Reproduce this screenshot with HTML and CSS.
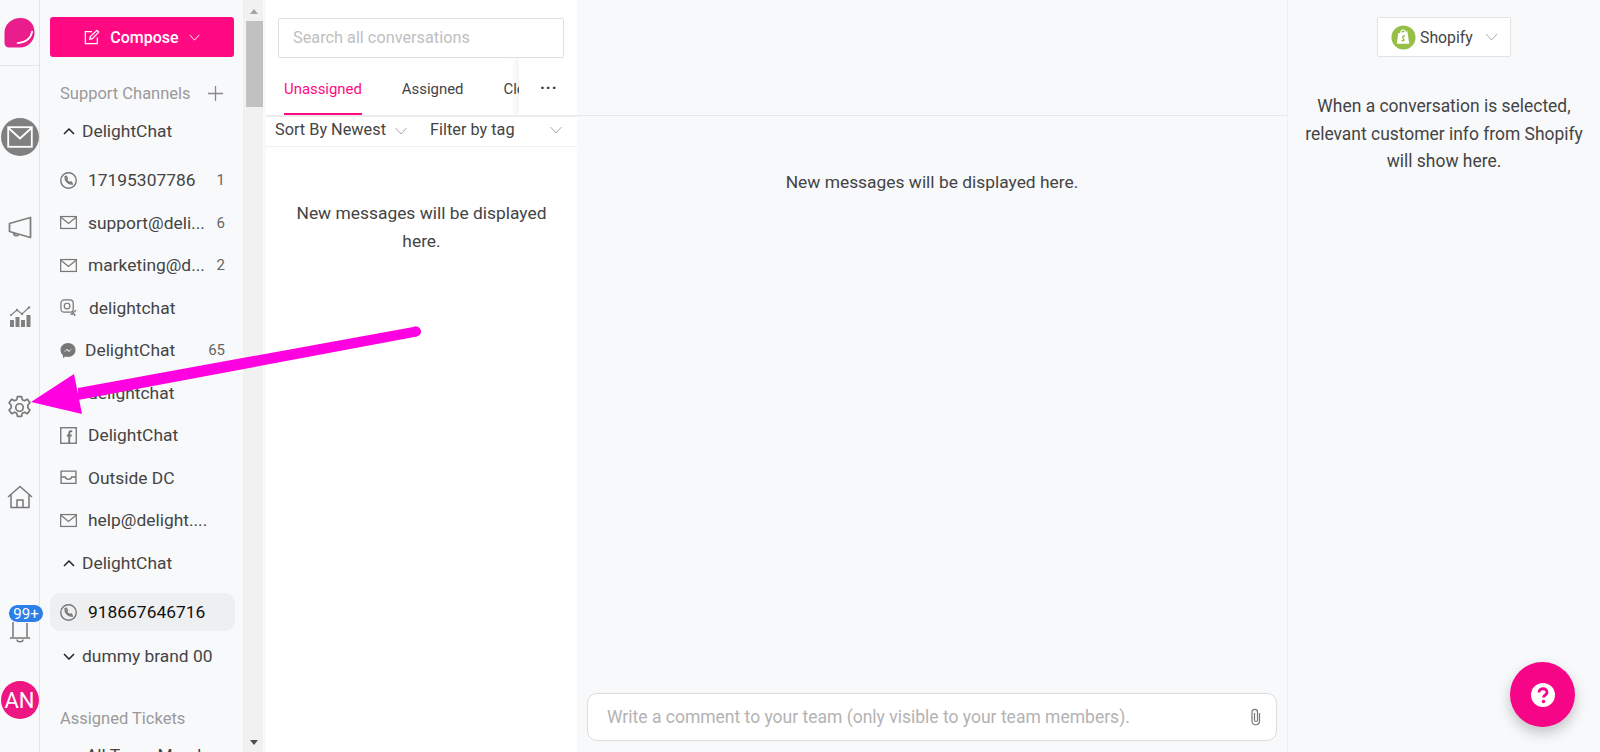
FILE: index.html
```html
<!DOCTYPE html>
<html lang="en">
<head>
<meta charset="utf-8">
<title>DelightChat</title>
<link rel="stylesheet" href="styles.css">
</head>
<body>
<div class="app">
  <nav class="rail">
    <div class="rail-logo">
      <svg class="logo" viewBox="0 0 32 32"><path d="M17 1C26 1 31.500 7.500 31.500 16C31.500 25 25 31.500 16 31.500H5.500C2.500 31.500.5 29.500.5 26.500V16C.5 7.500 8 1 17 1Z" fill="#e91e8c"/><path d="M29 15C28 21 23 26 14 27" fill="none" stroke="#fff" stroke-width="1.800" stroke-linecap="round"/></svg>
    </div>
    <div class="rail-item mail-item">
      <span class="mail-circle"><svg viewBox="0 0 26 22" width="26" height="22"><rect x="1.200" y="1.200" width="23.600" height="19.600" fill="none" stroke="#fff" stroke-width="1.800"/><path d="M1.500 2L13 12.500L24.500 2" fill="none" stroke="#fff" stroke-width="1.800"/></svg></span>
    </div>
    <div class="rail-item megaphone">
      <svg viewBox="0 0 24 24" width="24" height="24"><path d="M1.500 7.500L22.500 1.500V21.500L1.500 15.500ZM5.500 16.500C5.500 20.500 10.500 20.500 10.500 18" fill="none" stroke="#808080" stroke-width="1.800" stroke-linejoin="round"/></svg>
    </div>
    <div class="rail-item chart">
      <svg viewBox="0 0 22 22" width="22" height="22"><path d="M1 14h4v7H1zM6.500 11h4v10h-4zM12 14h4v7h-4zM17.500 9h4v12h-4z" fill="#808080"/><path d="M2 9L8 4L13 8L20 1.500" fill="none" stroke="#808080" stroke-width="1.100"/><circle cx="2" cy="9" r="1.100" fill="#808080"/><circle cx="8" cy="4" r="1.200" fill="#808080"/><circle cx="13" cy="8" r="1.200" fill="#808080"/><circle cx="20" cy="1.500" r="1.200" fill="#808080"/></svg>
    </div>
    <div class="rail-item gear">
      <svg viewBox="0 0 24 24" width="25" height="25" fill="none" stroke="#777" stroke-width="1.600" stroke-linejoin="round"><circle cx="12" cy="12" r="3.600"/><path d="M10 1.500h4l.6 3 2.200 1 2.700-1.500 2.500 3.500-2 2.300v2.400l2 2.300-2.500 3.500-2.700-1.500-2.200 1-.6 3h-4l-.6-3-2.200-1-2.700 1.500-2.500-3.500 2-2.300v-2.400l-2-2.300 2.500-3.500 2.700 1.500 2.200-1z"/></svg>
    </div>
    <div class="rail-item home">
      <svg viewBox="0 0 26 24" width="26" height="24" fill="none" stroke="#777" stroke-width="1.500" stroke-linejoin="round"><path d="M1 12L13 1.500L25 12M4 10V22.500H22V10M10 22.500V15H16V22.500"/></svg>
    </div>
    <div class="rail-item bell">
      <svg viewBox="0 0 22 22" width="22" height="22" fill="none" stroke="#777" stroke-width="1.500"><path d="M4 1V16M18 1V16M1 17H21"/><path d="M8 18.500C8 21.500 14 21.500 14 18.500" /></svg>
      <span class="badge">99+</span>
    </div>
    <div class="rail-item avatar-item"><span class="avatar">AN</span></div>
  </nav>

  <aside class="sidebar">
    <div class="side-inner">
      <button class="compose">
        <svg viewBox="0 0 18 18" width="16" height="16" fill="none" stroke="#fff" stroke-width="1.400"><path d="M15 9.500V16.500H1.500V3H9"/><path d="M6.500 11.500L7.200 8.500L14.500 1.500L16.500 3.500L9.500 10.800Z"/></svg>
        <span>Compose</span>
        <svg viewBox="0 0 12 8" width="11" height="7" fill="none" stroke="#fff" stroke-width="1.100"><path d="M.5 1L6 7L11.500 1"/></svg>
      </button>
      <div class="section-head"><span>Support Channels</span>
        <svg viewBox="0 0 15 15" width="15" height="15" stroke="#888" stroke-width="1.300"><path d="M7.500 0V15M0 7.500H15"/></svg>
      </div>
      <div class="brand brand-first"><svg class="chev" viewBox="0 0 12 8"><path d="M1 7L6 2L11 7"/></svg>DelightChat</div>
      <div class="channel first">
        <svg class="ci" viewBox="1 1 16 16"><circle cx="9" cy="9" r="7.300"/><path d="M5.800 5.500C5.300 9 9 12.900 12.600 12.300L11.700 10.500L10.200 10.900C8.700 10.400 7.700 9.400 7.200 8L8 6.800L6.800 5Z"/></svg>
        <span class="cn">17195307786</span><span class="count">1</span></div>
      <div class="channel">
        <svg class="ci" viewBox="0 0 18 14"><rect x=".7" y=".7" width="16.600" height="12.600"/><path d="M1 1.500L9 8L17 1.500"/></svg>
        <span class="cn">support@deli...</span><span class="count">6</span></div>
      <div class="channel">
        <svg class="ci" viewBox="0 0 18 14"><rect x=".7" y=".7" width="16.600" height="12.600"/><path d="M1 1.500L9 8L17 1.500"/></svg>
        <span class="cn">marketing@d...</span><span class="count">2</span></div>
      <div class="channel insta">
        <svg class="ci" viewBox="0 0 18 18"><rect x="1" y="1" width="13" height="13" rx="3.500"/><circle cx="7.500" cy="7.500" r="3"/><path d="M17 12L12 16H15.500V18"/></svg>
        <span class="cn">delightchat</span></div>
      <div class="channel messenger">
        <svg class="ci solid" viewBox="0 0 16 16"><path d="M8 .5C3.700.5.500 3.500.500 7.500C.500 9.700 1.500 11.500 3 12.800V15.500L5.500 14.100C6.300 14.300 7.100 14.500 8 14.500C12.300 14.500 15.500 11.400 15.500 7.500C15.500 3.500 12.300.5 8 .5Z"/><path class="light" d="M3.500 10L7 6.200L9 8.200L12.500 5.500L9 9.500L7 7.500Z"/></svg>
        <span class="cn">DelightChat</span><span class="count">65</span></div>
      <div class="channel">
        <svg class="ci" viewBox="0 0 18 18"><rect x="1" y="1" width="13" height="13" rx="3.500"/><circle cx="7.500" cy="7.500" r="3"/></svg>
        <span class="cn">delightchat</span></div>
      <div class="channel">
        <svg class="ci" viewBox="0 0 16 16"><rect x=".7" y=".7" width="14.600" height="14.600"/><path d="M11.500 4H10C9 4 8.700 4.600 8.700 5.500V15M6.500 8H11" stroke-width="1.800"/></svg>
        <span class="cn">DelightChat</span></div>
      <div class="channel">
        <svg class="ci" viewBox="0 0 16 14"><path d="M1 1H15V12.500H1ZM1 6.500H5C5.500 9.500 10.500 9.500 11 6.500H15"/></svg>
        <span class="cn">Outside DC</span></div>
      <div class="channel">
        <svg class="ci" viewBox="0 0 18 14"><rect x=".7" y=".7" width="16.600" height="12.600"/><path d="M1 1.500L9 8L17 1.500"/></svg>
        <span class="cn">help@delight....</span></div>
      <div class="brand brand-second"><svg class="chev" viewBox="0 0 12 8"><path d="M1 7L6 2L11 7"/></svg>DelightChat</div>
      <div class="channel active">
        <svg class="ci" viewBox="1 1 16 16"><circle cx="9" cy="9" r="7.300"/><path d="M5.800 5.500C5.300 9 9 12.900 12.600 12.300L11.700 10.500L10.200 10.900C8.700 10.400 7.700 9.400 7.200 8L8 6.800L6.800 5Z"/></svg>
        <span class="cn">918667646716</span></div>
      <div class="brand brand-third"><svg class="chev" viewBox="0 0 12 8"><path d="M1 2L6 7L11 2"/></svg>dummy brand 00</div>
      <div class="section-head assigned"><span>Assigned Tickets</span></div>
      <div class="brand last">All Team Members</div>
    </div>
    <div class="scrollbar">
      <span class="arrow-up"></span>
      <span class="thumb"></span>
      <span class="arrow-down"></span>
    </div>
  </aside>

  <section class="list">
    <div class="search"><span>Search all conversations</span></div>
    <div class="tabs">
      <span class="tab on">Unassigned</span>
      <span class="tab">Assigned</span>
      <span class="tab">Closed</span>
      <span class="more">···</span>
    </div>
    <div class="filters">
      <span class="sort">Sort By Newest<svg class="dd" viewBox="0 0 12 8"><path d="M.5 1L6 7L11.500 1"/></svg></span>
      <span class="tagf">Filter by tag<svg class="dd" viewBox="0 0 12 8"><path d="M.5 1L6 7L11.500 1"/></svg></span>
    </div>
    <p class="empty">New messages will be displayed here.</p>
  </section>

  <main class="main">
    <div class="main-head"></div>
    <p class="main-empty">New messages will be displayed here.</p>
    <div class="comment">
      <span>Write a comment to your team (only visible to your team members).</span>
      <svg viewBox="0 0 12 18" width="12" height="18" fill="none" stroke="#777" stroke-width="1.200"><path d="M9.500 5V13C9.500 18 2 18 2 13V4C2 .5 7.500.5 7.500 4V12C7.500 14 4.500 14 4.500 12V5"/></svg>
    </div>
  </main>

  <aside class="info">
    <div class="shopify">
      <svg viewBox="0 0 26 26" width="25" height="25"><circle cx="13" cy="13" r="12.500" fill="#95bf47"/><path d="M7.500 8.500L17 6.500L19 19.500L6 19.500Z" fill="#fff"/><path d="M10 9C10 4 15 4 15 8" fill="none" stroke="#fff" stroke-width="1.100"/><path d="M14.500 11.500C12.500 11 11 13 13 14.500C14.500 15.500 13 17 11 16" fill="none" stroke="#95bf47" stroke-width="1.400"/></svg>
      <span>Shopify</span>
      <svg class="dd big" viewBox="0 0 12 8"><path d="M.5 1L6 7L11.500 1"/></svg>
    </div>
    <p class="info-text">When a conversation is selected, relevant customer info from Shopify will show here.</p>
  </aside>
</div>

<button class="fab" aria-label="Help">
  <svg viewBox="0 0 24 24" width="24" height="24"><circle cx="12" cy="12" r="12" fill="#fff"/><path d="M8 9.500C8 4.500 16 4.500 16 9.500C16 12 12.500 12 12.500 14.500" fill="none" stroke="#f60587" stroke-width="2.800"/><circle cx="12.500" cy="18.500" r="1.800" fill="#f60587"/></svg>
</button>

<svg class="annotation" viewBox="0 0 1600 752" width="1600" height="752">
  <path d="M416 326.500L417 336.500L78 400L78 388Z" fill="#ff00e0"/>
  <circle cx="416" cy="331.500" r="5" fill="#ff00e0"/>
  <path d="M31 402L74 374L82 414Z" fill="#ff00e0"/>
</svg>
</body>
</html>
```

FILE: styles.css
```css
* { box-sizing: border-box; }
html, body { margin: 0; height: 100%; overflow: hidden; }
body { font-family: Roboto, "Liberation Sans", sans-serif; color: #444; background: #f8f9fb; }
.app { display: flex; height: 752px; }

/* left rail */
.rail { width: 40px; flex: none; background: #f8f9fb; border-right: 1px solid #e2e3e6; display: flex; flex-direction: column; align-items: center; }
.rail-logo { width: 100%; height: 66px; border-bottom: 1px solid #e6e7ea; padding-top: 17px; display: flex; justify-content: center; align-items: flex-start; }
.logo { width: 31px; height: 31px; }
.rail-item { position: relative; height: 40px; display: flex; align-items: center; justify-content: center; width: 100%; flex: none; }
.mail-item { margin-top: 51px; }
.mail-circle { width: 38px; height: 38px; border-radius: 50%; background: #808080; display: flex; align-items: center; justify-content: center; }
.megaphone { margin-top: 51px; }
.chart { margin-top: 49px; }
.gear { margin-top: 50px; }
.home { margin-top: 50px; }
.bell { margin-top: 95px; }
.avatar-item { margin-top: 28px; }
.avatar { width: 38px; height: 38px; border-radius: 50%; background: #ed1683; color: #fff; font-size: 22px; display: flex; align-items: center; justify-content: center; }
.badge { position: absolute; left: 8px; top: -8px; width: 36px; height: 19px; border-radius: 10px; background: #2d7fe8; border: 1px solid #fff; color: #fff; font-size: 15px; display: flex; align-items: center; justify-content: center; z-index: 2; }

/* channel sidebar */
.sidebar { width: 223px; flex: none; display: flex; background: #f8f9fb; overflow: hidden; }
.side-inner { width: 203px; flex: none; padding: 17px 0 0 10px; }
.compose { width: 184px; height: 40px; border: 0; border-radius: 3px; background: #ff0a83; color: #fff; font: 500 16px Roboto, sans-serif; display: flex; align-items: center; justify-content: center; gap: 10px; padding: 0; }
.section-head { display: flex; justify-content: space-between; align-items: center; width: 163px; margin: 25px 0 0 10px; height: 22px; color: #9a9a9a; font-size: 16.500px; }
.brand { display: flex; align-items: center; height: 22px; margin: 21px 0 0 13px; font-size: 17.400px; white-space: nowrap; }
.brand-first { margin-top: 16px; }
.brand-second { margin-top: 13px; }
.brand-third { margin-top: 14px; }
.chev { width: 12px; height: 8px; margin-right: 7px; fill: none; stroke: #222; stroke-width: 1.500; }
.channel { display: flex; align-items: center; height: 38px; margin-top: 4.500px; width: 185px; padding: 0 10px 0 10px; border-radius: 10px; font-size: 17.400px; white-space: nowrap; }
.channel.first { margin-top: 19px; }
.ci { width: 17px; height: 17px; margin-right: 11px; flex: none; fill: none; stroke: #777; stroke-width: 1.300; }
.ci.solid { fill: #777; stroke: none; width: 16px; }
.ci .light { fill: #f8f9fb; }
.cn { flex: 1; }
.count { color: #666; font-size: 15px; }
.insta .ci { margin-right: 12px; }
.messenger .ci { margin-right: 9px; }
.active { background: #eeeff1; color: #111; margin-top: 19px; }
.assigned { margin-top: 40px; }
.last { margin-left: 36px; margin-top: 15px; }
.scrollbar { width: 20px; flex: none; position: relative; background: #f1f1f1; }
.thumb { position: absolute; left: 3px; top: 21px; width: 17px; height: 86px; background: #c1c1c1; }
.arrow-up, .arrow-down { position: absolute; left: 7px; width: 0; height: 0; border-left: 4.500px solid transparent; border-right: 4.500px solid transparent; }
.arrow-up { top: 9px; border-bottom: 5px solid #a3a3a3; }
.arrow-down { bottom: 7px; border-top: 5px solid #505050; }

/* conversation list */
.list { width: 311px; flex: none; margin-left: 3px; background: #fff; padding-top: 1px; }
.search { margin: 17px 13px 0 12px; height: 40px; border: 1px solid #e0e0e0; border-radius: 2px; padding: 0 14px 2px; display: flex; align-items: center; color: #c0c0c0; font-size: 16.300px; white-space: nowrap; }
.tabs { position: relative; height: 59px; display: flex; border-bottom: 2px solid #ececec; overflow: hidden; }
.tab { height: 57px; padding-top: 22px; font-size: 14.900px; margin-left: 40px; color: #444; }
.tab:first-child { margin-left: 18px; }
.tab.on { color: #ff0a83; border-bottom: 2px solid #ff0a83; }
.more { position: absolute; right: 0; top: 0; width: 58px; height: 57px; background: #fff; padding: 20px 0 0 21px; font-size: 16px; font-weight: 700; letter-spacing: 1px; color: #333; box-shadow: -4px 0 6px rgba(0,0,0,.05); }
.filters { height: 30px; display: flex; align-items: center; border-bottom: 1px solid #f0f0f0; padding: 0 0 4px 9px; font-size: 16.300px; position: relative; }
.dd { width: 12px; height: 8px; fill: none; stroke: #aaa; stroke-width: 1; }
.sort .dd { margin-left: 9px; }
.tagf { position: absolute; left: 164px; width: 132px; display: flex; justify-content: space-between; align-items: center; }
.empty { margin: 53px 25px 0; text-align: center; font-size: 17.400px; line-height: 27.500px; }

/* main */
.main { flex: 1; min-width: 0; display: flex; flex-direction: column; background: #f8f9fb; padding: 0 10px 11px; }
.main-head { height: 116px; margin: 0 -10px; border-bottom: 1px solid #e6e7ea; }
.main-empty { flex: 1; margin: 55px 0 0; text-align: center; font-size: 17.400px; line-height: 22px; }
.comment { height: 48px; background: #fff; border: 1px solid #dcdcdc; border-radius: 10px; padding: 0 14px 0 19px; display: flex; align-items: center; justify-content: space-between; color: #b3b3b3; font-size: 17.500px; white-space: nowrap; }

/* right info */
.info { width: 313px; flex: none; background: #f8f9fb; border-left: 1px solid #eef0f3; display: flex; flex-direction: column; align-items: center; padding-top: 17px; }
.shopify { width: 134px; height: 40px; background: #fff; border: 1px solid #e3e3e3; border-radius: 2px; display: flex; align-items: center; padding-left: 13px; font-size: 15.800px; gap: 4px; }
.big { width: 13px; margin-left: 8px; }
.info-text { margin: 36px 0 0; width: 300px; text-align: center; font-size: 17.450px; line-height: 27.500px; }

/* overlays */
.fab { position: absolute; left: 1510px; top: 662px; width: 65px; height: 65px; border: 0; border-radius: 50%; background: #f60587; box-shadow: 0 6px 14px rgba(0,0,0,.22); display: flex; align-items: center; justify-content: center; padding: 0; }
.annotation { position: absolute; left: 0; top: 0; pointer-events: none; }
```
